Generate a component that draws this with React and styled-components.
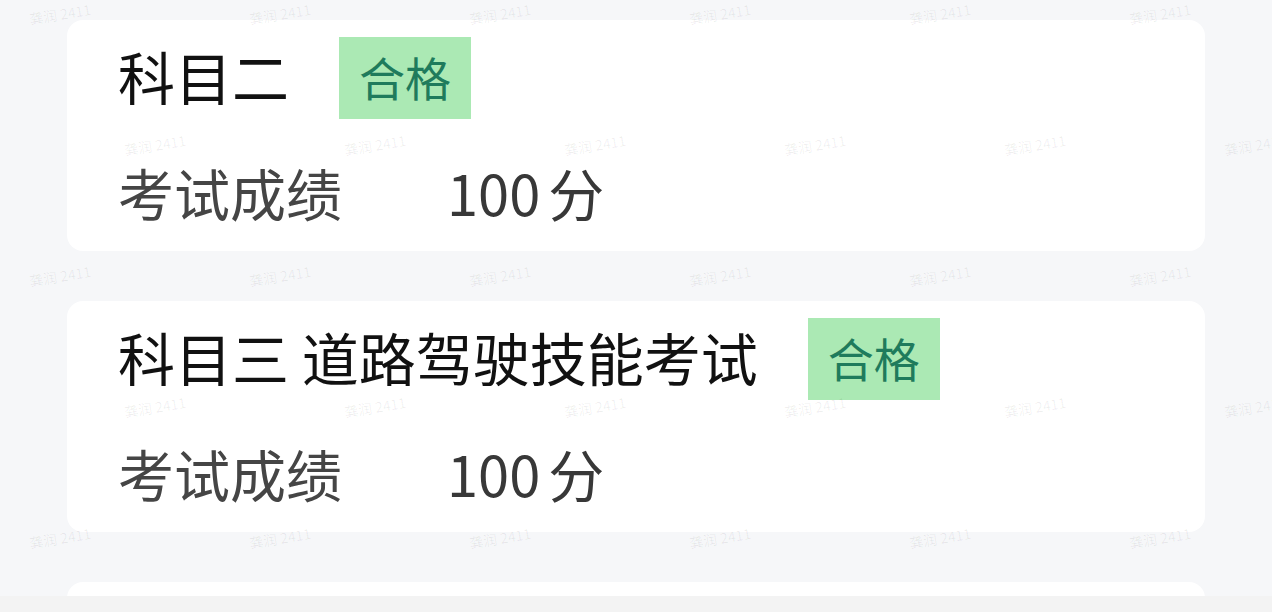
import React from "react";
import styled, { createGlobalStyle } from "styled-components";

const GlobalStyle = createGlobalStyle`
  html, body {
    margin: 0;
    padding: 0;
    background: #f6f7f9;
    font-family: "Noto Sans CJK SC", "Noto Sans", sans-serif;
  }
`;

const Page = styled.div`
  position: relative;
  display: flex;
  flex-direction: column;
  height: 100vh;
  overflow: hidden;
  background: #f6f7f9;
`;

const List = styled.div`
  flex: 1;
  overflow: hidden;
  display: flex;
  flex-direction: column;
  gap: 50px;
  padding: 20px 67px 0 67px;
`;

const Card = styled.div`
  flex-shrink: 0;
  background: #fff;
  border-radius: 16px;
  padding: 17px 0 16px 51px;
  height: 231px;
  box-sizing: border-box;
`;

const TitleRow = styled.div`
  display: flex;
  align-items: center;
  height: 82px;
`;

const Title = styled.div`
  font-size: 57px;
  color: #111;
  line-height: 1;
  margin-right: 50px;
  position: relative;
  top: -3px;
`;

const Badge = styled.div`
  display: flex;
  align-items: center;
  justify-content: center;
  width: 132px;
  height: 82px;
  background: #abe9b4;
  color: #1f7b5c;
  font-size: 46px;
  line-height: 1;
  padding-bottom: 4px;
  box-sizing: border-box;
`;

const ScoreRow = styled.div`
  display: flex;
  align-items: center;
  height: 80px;
  margin-top: 36px;
  font-size: 56px;
  color: #454545;
  line-height: 1;
  padding-bottom: 6px;
  box-sizing: border-box;
`;

const Label = styled.div`
  width: 329px;
`;

const Value = styled.div`
  color: #383838;
  span {
    margin-left: 8px;
  }
`;

const Footer = styled.div`
  height: 16px;
  flex-shrink: 0;
  background: #f3f3f3;
`;

const MarkLayer = styled.div`
  position: absolute;
  inset: 0;
  pointer-events: none;
  display: flex;
  flex-direction: column;
  padding-top: 8px;
`;

const MarkRow = styled.div`
  display: flex;
  flex-shrink: 0;
  height: 131px;
  padding-left: ${(p) => (p.$shift ? 133 : 38)}px;
`;

const Mark = styled.div`
  width: 220px;
  flex-shrink: 0;
  font-size: 14px;
  color: rgba(0, 0, 0, 0.065);
  transform: rotate(-9deg);
  transform-origin: left center;
  white-space: nowrap;
`;

const exams = [
  { title: "科目二", score: 100 },
  { title: "科目三 道路驾驶技能考试", score: 100 },
];

const App = () => {
  return (
    <Page>
      <GlobalStyle />
      <List>
        {exams.map((e) => (
          <Card key={e.title}>
            <TitleRow>
              <Title>{e.title}</Title>
              <Badge>合格</Badge>
            </TitleRow>
            <ScoreRow>
              <Label>考试成绩</Label>
              <Value>
                {e.score}
                <span>分</span>
              </Value>
            </ScoreRow>
          </Card>
        ))}
        <Card />
      </List>
      <Footer />
      <MarkLayer>
        {[0, 1, 2, 3, 4].map((r) => (
          <MarkRow key={r} $shift={r % 2 === 1}>
            {[0, 1, 2, 3, 4, 5].map((c) => (
              <Mark key={c}>龚润 2411</Mark>
            ))}
          </MarkRow>
        ))}
      </MarkLayer>
    </Page>
  );
};

export default App;
